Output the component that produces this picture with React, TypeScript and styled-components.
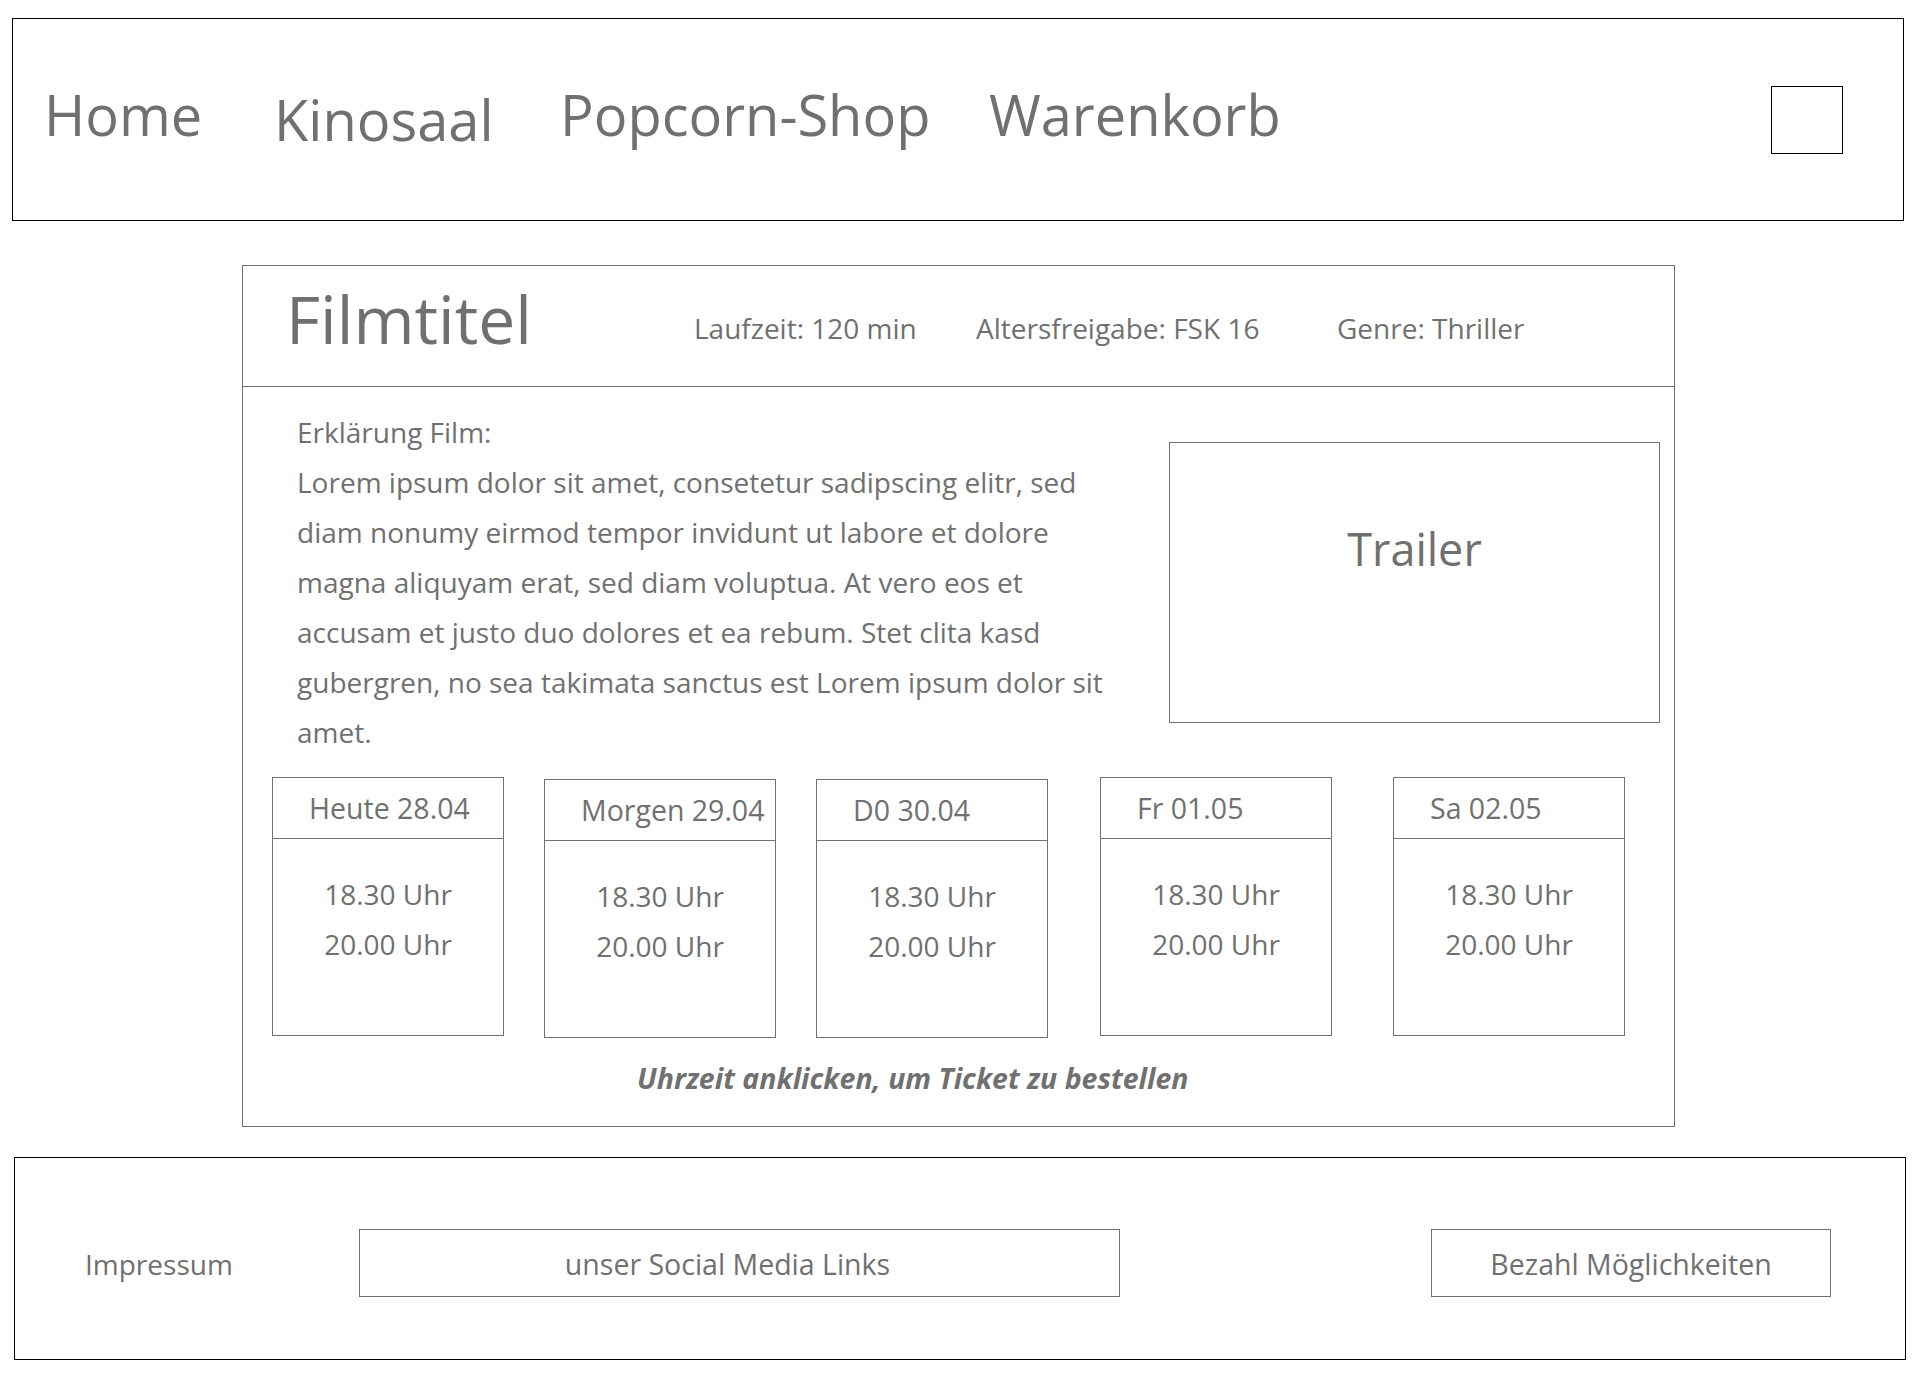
import styled, {createGlobalStyle} from 'styled-components'

const GlobalStyle = createGlobalStyle`
  body {
    margin: 0;
    background: #ffffff;
    font-family: "Open Sans", "Noto Sans", sans-serif;
    color: #707070;
  }
  * {
    box-sizing: border-box;
  }
`

const Page = styled.div`
  width: 1920px;
  min-height: 1392px;
  padding-top: 18px;
`

const Header = styled.header`
  margin-left: 12px;
  width: 1892px;
  height: 203px;
  border: 1px solid #000000;
  display: flex;
  align-items: center;
  padding: 0 60px 0 31px;
`

const Nav = styled.nav`
  display: flex;
  align-items: flex-start;
  margin-bottom: 6px;
`

const NavLink = styled.a<{$w?: number, $drop?: number}>`
  display: block;
  width: ${({$w}) => $w ? `${$w}px` : 'auto'};
  margin-top: ${({$drop}) => $drop || 0}px;
  font-size: 56px;
  line-height: 1;
  color: #707070;
  text-decoration: none;
  white-space: nowrap;
`

const Square = styled.div`
  margin-left: auto;
  width: 72px;
  height: 68px;
  border: 1px solid #000000;
`

const Card = styled.main`
  margin: 44px 0 0 242px;
  width: 1433px;
  border: 1px solid #707070;
`

const CardHead = styled.div`
  height: 121px;
  border-bottom: 1px solid #707070;
  display: flex;
  align-items: flex-start;
  padding: 19px 0 0 43px;
`

const Title = styled.h1`
  width: 408px;
  margin: 0;
  font-size: 66px;
  font-weight: 400;
  line-height: 1;
`

const Meta = styled.span<{$w?: number}>`
  width: ${({$w}) => $w ? `${$w}px` : 'auto'};
  margin-top: 29px;
  font-size: 28px;
  line-height: 1;
  white-space: nowrap;
`

const CardBody = styled.div`
  padding: 20px 14px 33px 29px;
`

const TopRow = styled.div`
  display: flex;
  justify-content: space-between;
  align-items: flex-start;
`

const Description = styled.p`
  margin: 0;
  padding-left: 25px;
  font-size: 28px;
  line-height: 50px;
  white-space: nowrap;
`

const Trailer = styled.div`
  width: 491px;
  height: 281px;
  margin-top: 35px;
  border: 1px solid #707070;
  padding-top: 83px;
  text-align: center;
  font-size: 45px;
  line-height: 1;
`

const DateRow = styled.div`
  display: flex;
  align-items: flex-start;
  margin-top: 20px;
`

const DayCard = styled.div<{$gap: number, $drop: number}>`
  width: 232px;
  height: 259px;
  margin-left: ${({$gap}) => $gap}px;
  margin-top: ${({$drop}) => $drop}px;
  border: 1px solid #707070;
`

const DayHead = styled.div`
  height: 61px;
  border-bottom: 1px solid #707070;
  padding: 16px 0 0 36px;
  font-size: 28.5px;
  line-height: 1;
  white-space: nowrap;
`

const Times = styled.div`
  padding-top: 30px;
  text-align: center;
  font-size: 28px;
  line-height: 50px;
`

const Time = styled.a`
  display: block;
  color: #707070;
  text-decoration: none;
  cursor: pointer;
`

const Hint = styled.p`
  margin: 26px 0 0 365px;
  font-size: 28.5px;
  font-weight: 700;
  font-style: italic;
  line-height: 1;
`

const Footer = styled.footer`
  margin: 30px 0 0 14px;
  width: 1892px;
  height: 203px;
  border: 1px solid #000000;
  display: flex;
  align-items: center;
  padding-left: 70px;
`

const FooterText = styled.span<{$w?: number}>`
  width: ${({$w}) => $w ? `${$w}px` : 'auto'};
  margin-top: 12px;
  font-size: 28px;
  line-height: 1;
  white-space: nowrap;
`

const FooterBox = styled.div<{$w: number, $gap?: number, $shift?: number}>`
  width: ${({$w}) => $w}px;
  height: 68px;
  margin: 10px 0 0 ${({$gap}) => $gap || 0}px;
  border: 1px solid #707070;
  display: flex;
  align-items: center;
  justify-content: center;
  font-size: 28.5px;
  line-height: 1;
  padding: 3px ${({$shift}) => $shift || 0}px 0 0;
`

const navItems = [
  {label: 'Home', w: 230, drop: 0},
  {label: 'Kinosaal', w: 286, drop: 5},
  {label: 'Popcorn-Shop', w: 429, drop: 0},
  {label: 'Warenkorb', drop: 0},
]

const lines = [
  'Erklärung Film:',
  'Lorem ipsum dolor sit amet, consetetur sadipscing elitr, sed',
  'diam nonumy eirmod tempor invidunt ut labore et dolore',
  'magna aliquyam erat, sed diam voluptua. At vero eos et',
  'accusam et justo duo dolores et ea rebum. Stet clita kasd',
  'gubergren, no sea takimata sanctus est Lorem ipsum dolor sit',
  'amet.',
]

const days = [
  {label: 'Heute 28.04', gap: 0, drop: 0},
  {label: 'Morgen 29.04', gap: 40, drop: 2},
  {label: 'D0 30.04', gap: 40, drop: 2},
  {label: 'Fr 01.05', gap: 52, drop: 0},
  {label: 'Sa 02.05', gap: 61, drop: 0},
]

const times = ['18.30 Uhr', '20.00 Uhr']

export default function App() {
  return (
    <Page>
      <GlobalStyle />
      <Header>
        <Nav>
          {navItems.map(item => (
            <NavLink key={item.label} href="#" $w={item.w} $drop={item.drop}>{item.label}</NavLink>
          ))}
        </Nav>
        <Square />
      </Header>

      <Card>
        <CardHead>
          <Title>Filmtitel</Title>
          <Meta $w={282}>Laufzeit: 120 min</Meta>
          <Meta $w={361}>Altersfreigabe: FSK 16</Meta>
          <Meta>Genre: Thriller</Meta>
        </CardHead>
        <CardBody>
          <TopRow>
            <Description>
              {lines.map((l, i) => (
                <span key={i}>{l}{i < lines.length - 1 && <br />}</span>
              ))}
            </Description>
            <Trailer>Trailer</Trailer>
          </TopRow>
          <DateRow>
            {days.map(d => (
              <DayCard key={d.label} $gap={d.gap} $drop={d.drop}>
                <DayHead>{d.label}</DayHead>
                <Times>
                  {times.map(t => <Time key={t}>{t}</Time>)}
                </Times>
              </DayCard>
            ))}
          </DateRow>
          <Hint>Uhrzeit anklicken, um Ticket zu bestellen</Hint>
        </CardBody>
      </Card>

      <Footer>
        <FooterText $w={274}>Impressum</FooterText>
        <FooterBox $w={761} $shift={24}>unser Social Media Links</FooterBox>
        <FooterBox $w={400} $gap={311}>Bezahl Möglichkeiten</FooterBox>
      </Footer>
    </Page>
  )
}
